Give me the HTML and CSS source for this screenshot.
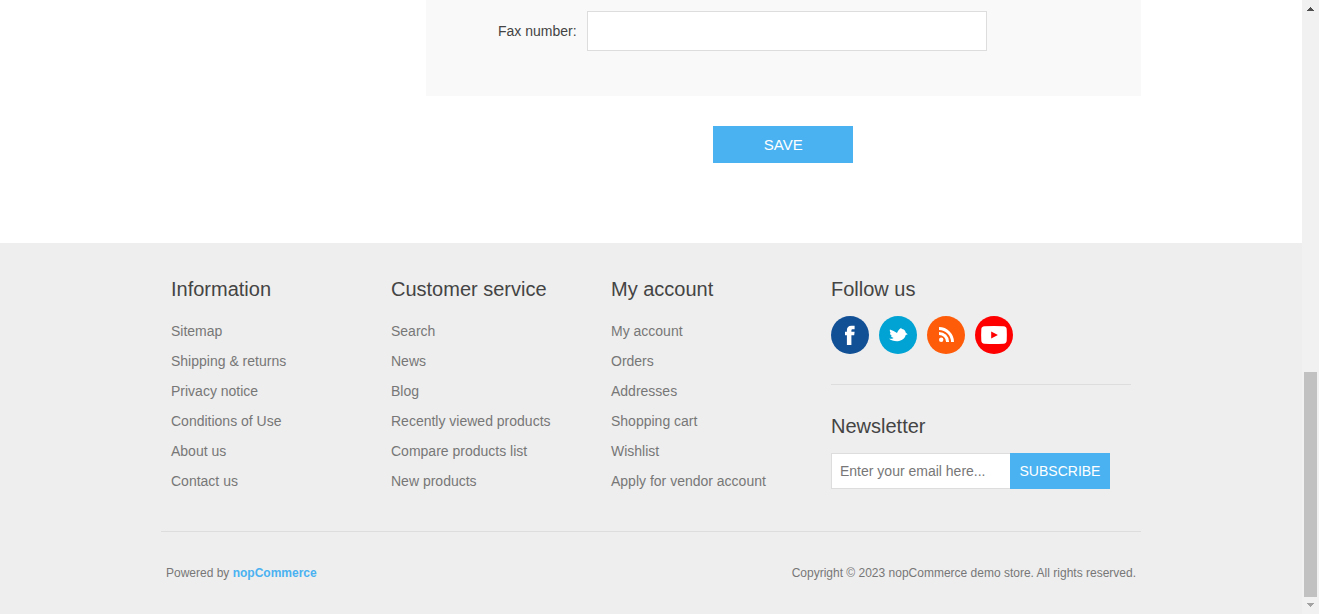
FILE: index.html
```html
<!DOCTYPE html>
<html lang="en">
<head>
<meta charset="utf-8">
<meta name="viewport" content="width=device-width, initial-scale=1">
<title>nopCommerce demo store. Address</title>
<link rel="stylesheet" href="styles.css">
</head>
<body>
<div class="page">
  <main class="content">
    <form class="address-form">
      <div class="form-fields">
        <label class="field-label" for="fax">Fax number:</label>
        <input class="field-input" type="text" id="fax">
      </div>
      <div class="buttons">
        <button class="button save-button" type="submit">SAVE</button>
      </div>
    </form>
  </main>
  <footer class="footer">
    <div class="footer-inner">
      <div class="footer-upper">
        <section>
          <h2 class="title">Information</h2>
          <ul class="links">
            <li><a href="#">Sitemap</a></li>
            <li><a href="#">Shipping &amp; returns</a></li>
            <li><a href="#">Privacy notice</a></li>
            <li><a href="#">Conditions of Use</a></li>
            <li><a href="#">About us</a></li>
            <li><a href="#">Contact us</a></li>
          </ul>
        </section>
        <section>
          <h2 class="title">Customer service</h2>
          <ul class="links">
            <li><a href="#">Search</a></li>
            <li><a href="#">News</a></li>
            <li><a href="#">Blog</a></li>
            <li><a href="#">Recently viewed products</a></li>
            <li><a href="#">Compare products list</a></li>
            <li><a href="#">New products</a></li>
          </ul>
        </section>
        <section>
          <h2 class="title">My account</h2>
          <ul class="links">
            <li><a href="#">My account</a></li>
            <li><a href="#">Orders</a></li>
            <li><a href="#">Addresses</a></li>
            <li><a href="#">Shopping cart</a></li>
            <li><a href="#">Wishlist</a></li>
            <li><a href="#">Apply for vendor account</a></li>
          </ul>
        </section>
        <section>
          <h2 class="title">Follow us</h2>
          <ul class="social">
            <li><a href="#" aria-label="Facebook"><svg class="icon" viewBox="0 0 38 38"><circle cx="19" cy="19" r="19" fill="#125096"/><path fill="#fff" d="M15.900 28.900V19.300H14V15.800h1.900v-1.500c0-3 1.500-4.600 4.500-4.600h3.200v3.600h-1.700c-1.100 0-1.500.5-1.500 1.400v1.100h3.200l-.4 3.500h-2.800v9.600z"/></svg></a></li>
            <li><a href="#" aria-label="Twitter"><svg class="icon" viewBox="0 0 38 38"><circle cx="19" cy="19" r="19" fill="#00a3d3"/><path fill="#fff" d="M9.800 22.600c1.900.4 3.500.1 4.800-.7-1.300-.3-2.200-1-2.600-1.900h1.100c-1.300-.6-2-1.600-2.200-2.900l1.100.2c-1-1.100-1.400-2.400-1.100-3.900 2.600.9 4.900 2.100 7.100 3.700.8-2.300 2.300-4.200 4.400-5.300l-.3.900 1.100-.4-.6.8c2.300.1 3.800 1.500 4.200 3.600l2 1.600-2.100.8c-.8 3.600-4 6-8.100 6.100-3.500.1-6.500-.7-8.800-2.600z"/></svg></a></li>
            <li><a href="#" aria-label="RSS"><svg class="icon" viewBox="0 0 38 38"><circle cx="19" cy="19" r="19" fill="#ff5c0a"/><circle cx="14.200" cy="23.800" r="2.200" fill="#fff"/><g fill="none" stroke="#fff" stroke-width="3"><path d="M12 17.400a8.600 8.600 0 0 1 8.600 8.600"/><path d="M12 12.500A13.500 13.500 0 0 1 25.500 26"/></g></svg></a></li>
            <li><a href="#" aria-label="YouTube"><svg class="icon" viewBox="0 0 38 38"><circle cx="19" cy="19" r="19" fill="#f00"/><path fill="#fff" d="M9.500 10.300q9.500-.7 19 0c2.200.2 3.100 1.100 3.200 3.200q.3 5.500 0 11c-.1 2.100-1 3-3.200 3.200q-9.500.7-19 0c-2.200-.2-3.100-1.100-3.200-3.200q-.3-5.500 0-11c.1-2.100 1-3 3.200-3.200z"/><path fill="#f00" d="M16.200 15.500v7l6.700-3.500z"/></svg></a></li>
          </ul>
          <form class="newsletter">
            <h2 class="title"><label for="newsletter-email">Newsletter</label></h2>
            <div class="newsletter-row">
              <input class="newsletter-input" type="email" id="newsletter-email" placeholder="Enter your email here...">
              <button class="button subscribe-button" type="submit">SUBSCRIBE</button>
            </div>
          </form>
        </section>
      </div>
      <div class="footer-lower">
        <span>Powered by <a class="powered-link" href="#">nopCommerce</a></span>
        <span>Copyright © 2023 nopCommerce demo store. All rights reserved.</span>
      </div>
    </div>
  </footer>
</div>
<div class="scrollbar" aria-hidden="true">
  <svg class="arrow" viewBox="0 0 17 17" shape-rendering="crispEdges"><path fill="#505050" d="M8 7h1v1h1v1h1v1h1v1H5v-1h1V9h1V8h1z"/></svg>
  <div class="track-before"></div>
  <div class="thumb"></div>
  <svg class="arrow" viewBox="0 0 17 17" shape-rendering="crispEdges"><path fill="#a3a3a3" d="M5 6h7v1h-1v1h-1v1H9v1H8V9H7V8H6V7H5z"/></svg>
</div>
</body>
</html>
```
FILE: styles.css
```css
* {
  box-sizing: border-box;
}

body {
  display: flex;
  min-height: 100vh;
  margin: 0;
  background: #fff;
  color: #777;
  font: 14px/20px "Liberation Sans", Arial, sans-serif;
}

ul {
  margin: 0;
  padding: 0;
  list-style: none;
}

a {
  color: inherit;
  text-decoration: none;
}

input,
button {
  margin: 0;
  border-radius: 0;
  font: inherit;
}

.page {
  display: flex;
  flex: 1;
  flex-direction: column;
}

.content,
.footer-inner {
  width: 100%;
  max-width: 980px;
  margin: 0 auto;
}

.address-form {
  width: 73%;
  margin-left: auto;
}

.form-fields {
  display: flex;
  align-items: center;
  gap: 10px;
  padding: 11px 0 45px;
  background: #f9f9f9;
}

.field-label {
  width: 151px;
  color: #444;
  text-align: right;
}

.field-input {
  width: 400px;
  height: 40px;
  padding: 0 8px;
  border: 1px solid #ddd;
  background: #fff;
  color: #777;
}

.buttons {
  padding: 30px 0 80px;
  text-align: center;
}

.button {
  border: 0;
  background: #4ab2f1;
  color: #fff;
  cursor: pointer;
}

.save-button {
  display: block;
  min-width: 140px;
  height: 37px;
  margin: 0 auto;
  font-size: 15px;
}

.footer {
  flex: 1;
  background: #eee;
}

.footer-upper {
  display: grid;
  grid-template-columns: repeat(3, 1fr) 300px;
  padding: 30px 10px 35px;
}

.title {
  margin: 0 0 11px;
  color: #444;
  font-size: 20px;
  font-weight: 400;
  line-height: 32px;
}

.links {
  line-height: 30px;
}

.social {
  display: flex;
  gap: 10px;
}

.icon {
  display: block;
  width: 38px;
  height: 38px;
}

.newsletter {
  margin-top: 30px;
  padding-top: 25px;
  border-top: 1px solid #ddd;
}

.newsletter-row {
  display: flex;
}

.newsletter-input {
  width: 179px;
  height: 36px;
  padding: 0 8px;
  border: 1px solid #ddd;
  border-right: 0;
  background: #fff;
  color: #777;
}

.newsletter-input::placeholder {
  color: #777;
}

.subscribe-button {
  width: 100px;
  padding: 0;
}

.footer-lower {
  display: flex;
  justify-content: space-between;
  padding: 30px 5px;
  border-top: 1px solid #ddd;
  font-size: 12px;
  line-height: 22px;
}

.powered-link {
  color: #4ab2f1;
  font-weight: 700;
}

.scrollbar {
  position: sticky;
  top: 0;
  display: flex;
  flex-direction: column;
  width: 17px;
  height: 100vh;
  background: #f1f1f1;
}

.arrow {
  display: block;
  width: 17px;
  height: 17px;
}

.track-before {
  flex: 355;
}

.thumb {
  flex: 225;
  margin: 0 2px;
  background: #c1c1c1;
}
```
